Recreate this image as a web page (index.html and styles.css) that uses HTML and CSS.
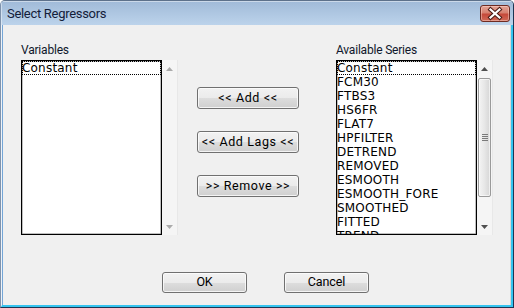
FILE: index.html
```html
<!DOCTYPE html>
<html>
<head>
<meta charset="utf-8">
<title>Select Regressors</title>
<link rel="stylesheet" href="styles.css">
</head>
<body>
<div class="window">
  <div class="titlebar">
    <span class="title">Select Regressors</span>
    <div class="close">
      <svg width="28" height="15" viewBox="0 0 28 15">
        <path d="M9.5 3.5 L18.5 11.5 M18.5 3.5 L9.5 11.5" stroke="#4b1c16" stroke-width="4.2" stroke-linecap="square" fill="none"/>
        <path d="M9.5 3.5 L18.5 11.5 M18.5 3.5 L9.5 11.5" stroke="#ffffff" stroke-width="2.2" stroke-linecap="square" fill="none"/>
      </svg>
    </div>
  </div>
  <div class="frame">
    <div class="client">
      <div class="main">
        <div class="panel">
          <div class="label">Variables</div>
          <div class="listwrap">
            <div class="listbox">
              <div class="item focus">Constant</div>
            </div>
            <div class="scroll disabled">
              <div class="arrow"><svg width="7" height="4" viewBox="0 0 7 4"><polygon points="0,4 3.5,0 7,4" class="tri"/></svg></div>
              <div class="track"></div>
              <div class="arrow"><svg width="7" height="4" viewBox="0 0 7 4"><polygon points="0,0 3.5,4 7,0" class="tri"/></svg></div>
            </div>
          </div>
        </div>
        <div class="mid">
          <button class="btn btn-wide">&lt;&lt; Add &lt;&lt;</button>
          <button class="btn btn-wide">&lt;&lt; Add Lags &lt;&lt;</button>
          <button class="btn btn-wide">&gt;&gt; Remove &gt;&gt;</button>
        </div>
        <div class="panel">
          <div class="label">Available Series</div>
          <div class="listwrap">
            <div class="listbox">
              <div class="item focus">Constant</div>
              <div class="item">FCM30</div>
              <div class="item">FTBS3</div>
              <div class="item">HS6FR</div>
              <div class="item">FLAT7</div>
              <div class="item">HPFILTER</div>
              <div class="item">DETREND</div>
              <div class="item">REMOVED</div>
              <div class="item">ESMOOTH</div>
              <div class="item">ESMOOTH_FORE</div>
              <div class="item">SMOOTHED</div>
              <div class="item">FITTED</div>
              <div class="item">TREND</div>
            </div>
            <div class="scroll">
              <div class="arrow"><svg width="7" height="4" viewBox="0 0 7 4"><polygon points="0,4 3.5,0 7,4" class="tri"/></svg></div>
              <div class="track">
                <div class="thumb">
                  <svg width="6" height="7" viewBox="0 0 6 7">
                    <rect x="0" y="0" width="6" height="1" fill="#7a7a7a"/>
                    <rect x="0" y="2" width="6" height="1" fill="#7a7a7a"/>
                    <rect x="0" y="4" width="6" height="1" fill="#7a7a7a"/>
                    <rect x="0" y="6" width="6" height="1" fill="#7a7a7a"/>
                  </svg>
                </div>
              </div>
              <div class="arrow"><svg width="7" height="4" viewBox="0 0 7 4"><polygon points="0,0 3.5,4 7,0" class="tri"/></svg></div>
            </div>
          </div>
        </div>
      </div>
      <div class="footer">
        <button class="btn btn-sm">OK</button>
        <button class="btn btn-sm">Cancel</button>
      </div>
    </div>
  </div>
</div>
</body>
</html>
```
FILE: styles.css
```css
* { box-sizing: border-box; }
body { margin: 0; background: #ffffff; font-family: Roboto, "Liberation Sans", sans-serif; }

.window {
  width: 514px; height: 308px;
  display: flex; flex-direction: column;
  border: 1px solid #1d3552;
  border-top-color: #5d718b;
  border-left-color: #7f93ad;
  border-radius: 5px 5px 0 0;
  background: #a9c1dc;
  overflow: hidden;
}

.titlebar {
  height: 24px; flex: none;
  display: flex; align-items: flex-start; justify-content: space-between;
  background: linear-gradient(#a0bad8, #bcd3eb);
  padding-left: 6px;
  box-shadow: inset 1px 1px 0 rgba(255,255,255,0.45);
}
.title {
  font: 13px/24px Roboto, sans-serif;
  letter-spacing: -0.3px;
  padding-top: 1px;
  color: #13203a;
}
.close {
  width: 30px; height: 17px;
  margin: 4px 3px 0 0;
  border: 1px solid #6e2b22;
  border-radius: 3px;
  background: linear-gradient(#e3a497 0%, #d7806f 45%, #c5493a 55%, #cf6a58 100%);
  box-shadow: inset 0 0 0 1px rgba(255,220,210,0.45);
  display: flex; align-items: center; justify-content: center;
}

.frame {
  flex: 1; display: flex;
  border-left: 1px solid #eef3f8;
  border-right: 2px solid #35c4ef;
  border-bottom: 2px solid #35c4ef;
}
.client {
  flex: 1;
  background: #f0f0f0;
  border-left: 1px solid #74a5d6;
  border-right: 1px solid #d8d8d8;
  padding: 18px 0 0 18px;
  display: flex; flex-direction: column;
}

.main { display: flex; align-items: flex-start; }
.panel { display: flex; flex-direction: column; }
.label {
  font: 12px/15px Roboto, sans-serif;
  letter-spacing: -0.2px;
  height: 15px; margin-bottom: 2px;
  color: #0f172b;
}
.listwrap { display: flex; height: 175px; }
.listbox {
  width: 141px; height: 175px;
  background: #ffffff;
  border: 1px solid #000;
  box-shadow: inset 0 0 0 0.5px rgba(0,0,0,0.5);
  overflow: hidden;
  font: 12px/14px "DejaVu Sans", Verdana, sans-serif;
  letter-spacing: 0.2px;
  color: #000;
}
.item { height: 14px; white-space: nowrap; padding-left: 0; }
.item.focus { outline: 1px dotted #000; outline-offset: -1px; }

.scroll {
  width: 16px; height: 175px;
  display: flex; flex-direction: column;
  background: #f5f5f5;
  border-right: 1px solid #e8e8e8;
}
.arrow { height: 17px; flex: none; display: flex; align-items: center; justify-content: center; }
.tri { fill: #4f4f4f; }
.scroll.disabled .tri { fill: #ababab; }
.track { flex: 1; padding: 1px 1px 0 1px; }
.thumb {
  height: 119px;
  border: 1px solid #9a9a9a;
  border-radius: 2px;
  background: linear-gradient(90deg, #f4f4f4, #e7e7e7 50%, #d6d6d6);
  box-shadow: inset 0 0 0 1px rgba(255,255,255,0.6);
  display: flex; align-items: center; justify-content: center;
}

.mid {
  display: flex; flex-direction: column; gap: 22px;
  margin: 44px 37px 0 19px;
}
.btn {
  width: 102px; height: 22px;
  padding: 0; margin: 0;
  border: 1px solid #707070;
  border-radius: 3px;
  background: linear-gradient(#f2f2f2 0%, #ebebeb 50%, #dddddd 51%, #cfcfcf 100%);
  box-shadow: inset 0 0 0 1px rgba(252,252,252,0.8);
  font: 12px/1 Roboto, sans-serif;
  letter-spacing: -0.1px;
  color: #000;
  display: flex; align-items: center; justify-content: center;
}
.btn-wide { letter-spacing: 0.6px; font-size: 12.5px; }
.footer {
  display: flex; gap: 37px;
  margin-top: 37px;
  padding-left: 141px;
}
.btn-sm { width: 85px; height: 21px; font-size: 12.5px; }
```
